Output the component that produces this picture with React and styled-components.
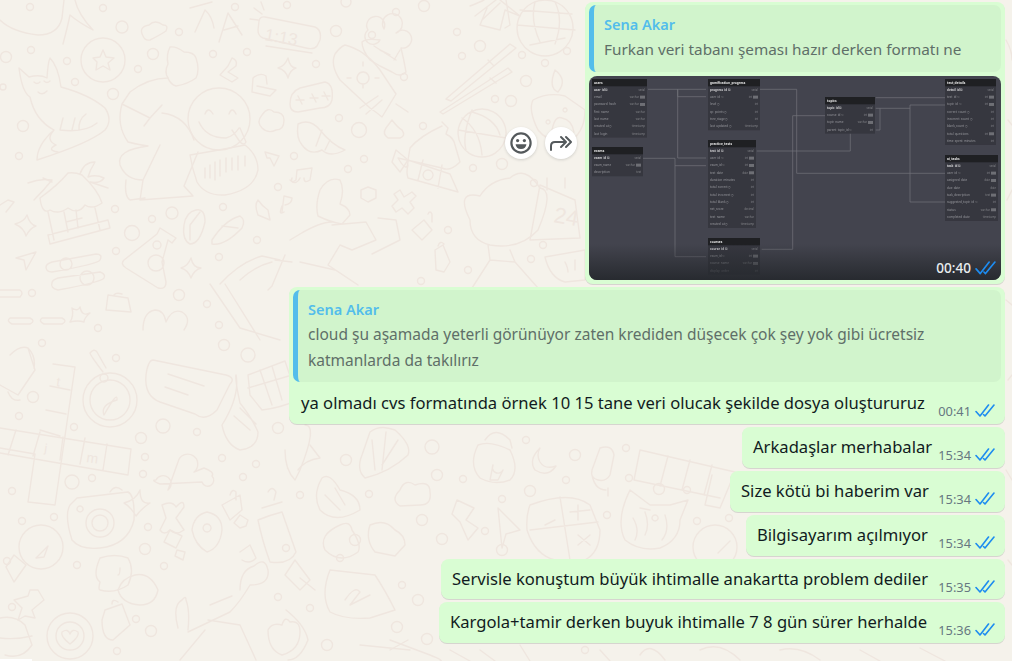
import React from 'react';
import styled, { createGlobalStyle } from 'styled-components';

const GlobalStyle = createGlobalStyle`
  html, body {
    margin: 0;
    padding: 0;
    background: #f5f2eb;
    overflow: hidden;
  }
  * { box-sizing: border-box; }
`;

// wallpaper dots, [x, y, r]
const dots = [
  [30,7,3.5],[103,8,3.5],[122,27,6],[179,32,3.5],[235,7,3.5],[287,5,3.5],[31,50,3.5],[6,57,5.5],[67,61,3.5],[153,54,5.5],[138,69,3.5],[213,54,3.5],[247,52,3.5],[75,82,3.5],[113,94,5.5],[3,87,3],[23,126,5.5],[19,156,3.5],[294,156,3.5],[278,187,3.5],[115,209,3.5],[152,219,3.5],[172,213,6],[223,207,3.5],[132,233,7.5],[116,251,3.5],[219,257,3.5],[257,240,3.5],[32,293,3.5],[179,295,5.5],[207,304,3.5],[219,325,3.5],[98,328,3.5],
  [42,343,3.5],[224,345,5.5],[248,355,7],[116,358,3.5],[33,397,5.5],[19,416,3.5],[74,427,3.5],[163,426,7],[197,432,3.5],[278,428,5.5],[141,438,5.5],[145,457,3.5],[143,474,3.5],[222,458,3.5],[256,464,3.5],[243,477,3.5],[72,482,7],[92,478,3.5],[12,491,3.5],[22,521,3.5],[54,517,3.5],[148,527,3.5],[145,549,5.5],[286,548,3.5],[7,561,3.5],[77,565,3.5],[164,566,3.5],[278,597,3.5],[12,607,3.5],[136,619,3.5],[151,631,5.5],[117,651,3.5],
  [346,2,5],[424,6,5.5],[396,12,3.5],[336,31,5.5],[372,35,3.5],[457,32,3.5],[316,64,3.5],[462,56,3.5],[480,46,5.5],[522,55,3.5],[567,51,3.5],[545,63,3.5],[404,77,3.5],[526,81,5.5],[495,99,3.5],[511,101,5.5],[339,118,3.5],[359,130,7.5],[423,126,3.5],[364,159,3.5],[348,169,3.5],[473,168,3.5],[502,164,5.5],[534,183,3.5],[448,230,3.5],[543,245,3.5],[531,259,3.5],[468,270,3.5],[421,281,3.5],
  [346,460,5.5],[432,447,7],[526,440,3.5],[575,455,5.5],[626,448,3.5],[437,475,5.5],[463,479,3.5],[566,480,3.5],[530,491,5.5],[629,478,3.5],[659,489,5.5],[687,490,3.5],[300,495,3.5],[369,494,3.5],[502,499,3.5],[607,515,3.5],[697,521,3.5],[729,518,3.5],[422,520,5.5],[485,531,3.5],[442,539,5.5],[355,540,5.5],[340,558,3.5],[502,550,5.5],[402,585,3.5],[418,600,5.5],[310,608,3.5],[397,627,5.5],[327,645,5.5],[427,639,5.5],[585,650,3.5],
];

// wallpaper line drawings
const doodles = [
  // shark, top left
  'M0 20 Q12 32 38 35 Q58 35 62 18 L64 0 M63 44 Q68 25 70 15 Q78 22 93 30 M75 0 Q78 14 93 30',
  // cloud, letters
  'M143 36 Q138 27 149 25 Q155 19 163 25 Q169 25 166 31 Q160 35 150 40 Q145 41 143 36Z',
  'M190 8 L212 2 M195 32 L205 10 Q212 16 214 28 M219 42 L228 13 L242 35 M224 30 L238 26',
  // clock
  'M265 17 L315 27 Q322 30 320 40 L317 46 Q314 50 306 48 L263 38 Q258 36 258 30 L259 21 Q260 16 265 17Z M266 46 L312 53 M254 8 L262 14 M250 19 L258 20 M261 2 L264 10',
  // star in a circle
  'M81 60 a22 22 0 1 0 44 0 a22 22 0 1 0 -44 0 M103 50 L106 57 L114 58 L108 63 L110 70 L103 66 L96 70 L97 62 L93 58 L100 57Z',
  // fox
  'M19 68 L29 77 Q40 74 47 78 Q48 62 50 58 Q58 66 61 87 Q90 95 105 108 Q113 120 105 130 Q90 143 37 160 Q37 145 54 130 Q35 120 30 97 Q22 92 19 68Z M54 130 Q45 140 56 145 Q46 150 58 152 M63 118 L60 130 M75 118 L72 130 M86 114 Q78 120 79 130 M97 123 Q85 133 60 130 M34 82 Q37 85 40 82 M44 81 Q47 84 50 81 M38 92 Q42 96 47 91',
  // man hugging the smiley
  'M170 47 Q176 46 184 52 Q194 52 196 58 Q200 70 196 78 Q188 84 176 86 Q170 84 168 78 Q164 72 168 64 Q166 55 170 47Z',
  'M168 78 Q148 78 130 92 L122 104 Q116 125 128 142 Q140 145 148 146 Q116 150 120 165 Q126 180 143 180 L140 200 L193 196 L184 186 L198 152 M122 104 L150 118 L162 105 M150 118 L144 126 M162 113 Q186 116 194 140 M143 180 L160 145 M126 180 Q124 196 130 200 L145 198',
  // smiley with tongue
  'M188 119 a31 31 0 1 0 62 0 a31 31 0 1 0 -62 0 M199 122 Q206 138 226 138 Q234 136 239 128 M205 114 Q208 106 213 114 M229 114 Q232 106 236 114 M232 130 L240 142 Q244 146 246 142 L240 128',
  'M190 155 Q220 150 245 145 Q258 155 258 170 Q254 190 225 195 Q205 196 197 182 Q192 168 190 155Z M205 168 L205 178 M210 165 L210 178 M215 162 L215 180 M220 160 L220 176 M226 158 L226 172 M232 158 L232 170 M238 156 L238 170 M245 156 L245 166',
  // padlocks, stars
  'M228 72 L238 78 L232 82 L220 75 L228 66 L232 58 Q238 60 236 66Z',
  'M257 86 L276 90 L270 96 L252 92 L253 78 Q260 72 266 76 L267 84',
  'M288 58 Q290 68 296 68 Q290 70 288 78 Q286 70 278 68 Q285 66 288 58Z',
  'M262 115 Q268 106 274 112 Q284 112 284 120 Q284 130 276 130 Q268 134 262 128 Q256 122 262 115Z',
  'M265 152 L279 156 L274 166 L270 158 L267 158Z M290 180 Q296 186 300 178',
  'M258 200 Q262 206 268 210 L270 220 L258 215Q254 205 258 200Z M282 212 L284 196 L292 198 Q292 204 285 205 M284 212 Q278 216 282 206',
  // hut
  'M40 198 Q58 185 68 173 Q75 172 82 175 Q98 190 102 203 Q92 210 85 205 Q78 215 68 208 Q58 215 50 210 Q42 215 40 198Z M48 212 L54 240 M95 208 L100 230 M48 235 L108 220 L110 228 L50 244 Z M64 212 L68 232 M76 210 L78 228 M66 222 L82 218 M28 183 Q40 178 52 180 Q44 190 34 200 M80 174 Q84 162 95 162 Q90 170 88 177 Q96 174 104 178 Q100 184 90 182 L108 188',
  'M43 178 L52 182 M0 205 L8 200 L14 202 L6 212',
  // sparkles
  'M27 215 Q30 225 36 226 Q30 228 26 236 Q24 228 15 224 Q24 222 27 215Z',
  'M191 258 Q193 268 201 268 Q194 270 191 278 Q188 270 181 268 Q188 266 191 258Z',
  'M80 307 Q82 317 90 313 Q84 318 84 322 Q78 320 70 322 Q74 316 72 308 Q78 312 80 307Z',
  // paper plane, sliders
  'M16 258 L36 252 L26 270 L24 260Z',
  'M52 262 L96 254 Q103 254 100 260 Q98 264 52 272 Q46 272 46 267 Q46 264 52 262Z M60 264 a6 6 0 1 0 12 0 a6 6 0 1 0 -12 0',
  'M58 278 L100 272 Q106 274 104 278 Q102 282 58 290 Q50 288 52 283 Q52 280 58 278Z M80 278 a7 7 0 1 0 14 0 a7 7 0 1 0 -14 0',
  'M0 290 H20 Q24 293 20 297 H0 M10 318 H30 Q36 321 30 324 H12 Q6 321 10 318Z M42 318 H62 Q68 321 62 324 H44 Q38 321 42 318Z',
  // chemistry flask
  'M160 228 L176 238 L172 243 L168 240 L162 262 L166 282 Q166 290 158 288 L126 268 Q120 264 124 260 L152 238 L157 234Z M148 263 a8 8 0 1 0 16 0 a8 8 0 1 0 -16 0 M153 245 a4 4 0 1 0 8 0 a4 4 0 1 0 -8 0',
  // flip flops
  'M196 210 Q205 208 205 222 Q200 244 190 244 Q182 240 184 225 Q186 212 196 210Z M190 225 L200 212 M190 225 L190 240',
  'M212 240 Q225 220 240 216 Q246 220 242 228 Q225 246 212 244 Z M222 226 L238 228',
  // person under umbrella bottom of the column
  'M220 284 Q240 262 262 256 L280 260 M225 284 L260 340 M240 280 Q255 266 272 262 M210 284 L240 328 L280 340 M285 255 L272 286 L268 290 M275 260 L292 262',
  // bag, heart
  'M108 295 L128 298 L131 312 L106 310Z M114 295 Q116 292 122 294',
  'M143 330 Q143 312 155 310 Q164 310 166 322 Q172 308 182 312 Q192 318 184 330',
  // teapot, coffee, crossword
  'M10 355 Q20 345 28 348 L35 370 L18 395 L0 385 M28 348 Q36 356 34 368 M8 392 Q12 402 20 400',
  'M53 364 L75 367 L55 505 L28 502 L35 454 L0 448 M0 428 L131 449 L128 475 L0 453 M50 386 L70 390 M46 410 L66 414 M40 430 L60 436 M16 430 L8 455 M40 432 L33 456 M63 437 L60 460 M85 438 L80 464 M107 444 L103 470',
  // compass
  'M83 400 a27 27 0 1 0 54 0 a27 27 0 1 0 -54 0 M90 400 a20 20 0 1 0 40 0 a20 20 0 1 0 -40 0 M117 400 Q118 390 104 415 Q100 405 117 400Z M103 372 Q90 355 90 353 Q94 348 97 352 L106 368',
  'M100 378 a4 4 0 1 0 8 0 a4 4 0 1 0 -8 0',
  // speech tag, ring hand
  'M153 360 L226 375 Q236 378 230 384 L217 410 Q205 422 195 414 L160 402 Q144 396 146 375 Q148 360 153 360Z M168 374 L204 386 M165 387 L188 395',
  'M240 403 Q235 380 236 375 Q240 396 222 425 Q226 445 240 450 Q258 448 258 432 Q252 418 240 403 M234 416 L250 430 M240 408 L256 424',
  // chocolate
  'M248 375 L285 361 L298 400 Q280 408 262 410 L250 395 Z M260 370 L272 405 M272 366 L282 400 M248 388 L292 375 M290 370 L300 365 L310 385',
  // baby with star
  'M156 480 a8 8 0 1 1 12 10 L178 462 a10 10 0 1 1 16 10 L204 468 Q215 472 212 476 a6 6 0 1 1 -10 6 L160 484 Q150 480 156 480Z',
  // bottle, padlock, plus
  'M258 520 Q270 515 282 512 L296 552 Q290 565 270 562 Q262 540 258 520Z M262 508 L282 502 M268 492 Q272 485 276 492 L274 500',
  'M222 505 L240 495 L242 510 L230 520 L222 505 M230 495 Q232 488 236 492 L236 500',
  'M162 505 Q172 500 176 507 Q184 498 184 507 L176 518 L184 530 Q176 536 170 530 Q164 536 160 530 L166 518Z',
  // camera with sparkle
  'M77 498 L128 492 Q135 495 134 520 Q128 545 100 548 Q80 550 72 540 Q64 515 70 505Z M86 523 a14 14 0 1 0 28 0 a14 14 0 1 0 -28 0 M92 523 a8 8 0 1 0 16 0 a8 8 0 1 0 -16 0 M80 506 a3 3 0 1 0 .1 0 M110 492 Q115 484 122 490 M140 490 Q140 505 150 503 Q142 508 136 516 Q130 506 124 503 Q136 500 140 490Z',
  // location pin, squares
  'M207 512 Q222 515 222 530 Q220 548 207 552 Q195 545 192 530 Q194 515 207 512Z M207 524 a4 4 0 1 0 .1 0',
  'M170 530 L182 536 L176 548 L164 542Z M177 550 L185 552 L183 560 L175 556Z',
  'M240 515 L248 520 L246 526 L240 528 L234 523Z',
  // gauge
  'M19 547 a22 22 0 1 0 44 0 a22 22 0 1 0 -44 0 M36 558 L48 546 L44 557 Z',
  // dumplings, girl
  'M100 558 Q115 553 128 558 Q135 570 128 585 Q115 594 100 590 Q98 590 100 582 Q92 576 100 558Z M120 568 Q120 575 118 575',
  'M135 575 Q150 572 158 590 Q155 605 140 605 Q122 604 118 590 Q122 578 135 575Z',
  'M178 628 Q172 605 182 600 Q186 595 186 600 Q190 610 188 630 M210 605 Q222 600 232 596 M240 590 Q240 570 254 566 Q265 556 268 570 Q270 585 250 585 Q240 602 230 612 L188 632 M208 620 L240 625 L256 660 M180 660 L205 630 M240 552 L250 545 L256 558 Q250 565 242 560',
  // apple, bottle, heart cup
  'M282 625 Q285 615 290 622 Q300 620 300 632 Q300 650 282 655 Q268 650 268 630 Q272 622 282 625Z',
  'M105 610 L122 604 L130 625 L113 640 Q102 640 102 620Z M112 604 Q112 598 118 602',
  'M47 636 a23 23 0 1 0 46 0 a23 23 0 1 0 -46 0 M56 636 a14 14 0 1 0 28 0 a14 14 0 1 0 -28 0 M70 644 Q60 636 62 632 Q68 628 70 634 Q72 628 78 632 Q80 636 70 644Z',
  'M0 618 Q15 615 25 625 L32 645 Q22 660 5 655 M0 638 Q15 640 32 636',
  // star bottom left cross
  'M30 590 H38 L44 600 L32 610 L35 618 L25 616 L18 620 L22 608 L14 600 L28 596Z',
  'M14 582 L26 565 L14 555 L6 567Z',
  // sunscreen tube
  'M345 45 Q365 50 380 70 Q390 85 396 94 L382 117 Q376 112 370 108 L340 80 Q330 65 335 54 Q340 47 345 45Z M382 100 L366 114 M378 96 L360 108 M396 104 L408 112 M363 72 a6 6 0 1 0 .1 0 M363 62 V66 M363 84 V88 M375 78 H379 M347 78 H351',
  // friends cluster
  'M380 40 a8 8 0 1 1 -12 -10 a9 9 0 1 1 16 -1 a10 10 0 1 1 12 4 a9 9 0 1 1 5 15 Q404 60 406 72 Q400 78 392 72 L380 66 L370 60 Q362 50 362 42 Q366 38 380 40Z M400 50 L394 60 M390 55 L380 50 M396 60 L374 46',
  // palm
  'M470 6 Q480 2 484 0 M496 0 L475 16 M482 20 L500 3 M487 8 L480 25 L500 30 L505 10 M505 10 L520 16 L500 0 M506 0 L510 25 L505 28',
  // disco ball
  'M545 0 a28 28 0 1 0 .1 0 M517 25 L575 30 M520 10 L572 14 M530 45 L565 38 M535 2 Q530 20 540 42 M555 2 Q564 20 555 44',
  // chopsticks
  'M510 44 L447 98 L446 99 L451 101 L516 48 Q510 44 510 44Z M508 68 L440 112 L443 114 L512 72Z M488 60 L494 66 M490 78 L496 83',
  // diya with flame
  'M555 70 Q568 80 558 92 Q548 88 555 70Z M533 100 Q548 92 565 96 L585 110 Q585 130 572 140 Q550 145 538 130 Q528 110 533 100Z M552 130 Q555 115 562 118 Q572 120 574 132 M548 120 a2 2 0 1 0 .1 0 M565 108 a2 2 0 1 0 .1 0',
  // pass bubble, shell
  'M300 88 L325 82 Q334 84 332 100 Q330 108 320 108 L298 112 Q290 112 290 104 Q290 92 300 88Z M296 100 H304 M298 96 L302 104 M310 98 H318 M312 94 L316 102 M322 96 H330 M324 92 L328 100',
  'M298 124 Q310 118 320 130 Q332 145 345 150 Q330 158 322 150 Q310 156 302 145 Q296 138 298 124Z M322 130 L316 146 M330 140 L325 150',
  // basketball
  'M482 109 a24 24 0 1 0 .1 0 M462 118 Q480 130 482 155 M458 130 L506 138 M472 112 Q495 118 500 135 M472 110 Q462 135 466 150',
  // poo, house
  'M392 120 Q398 128 402 130 Q406 136 400 138 L388 138 Q382 134 386 128 L392 120Z',
  'M442 122 L448 128 L446 134 Q454 138 455 145 L460 162 Q450 172 442 168 L398 158 Q408 175 408 160 M408 160 L450 174 L458 192 L408 178 Q406 172 408 165 M410 148 Q420 136 442 126 M410 148 L408 160 M423 160 L418 180 M442 165 L438 188 M428 170 a5 5 0 1 0 .1 0',
  'M396 150 L408 160 L400 172 L392 162Z',
  // music note
  'M297 170 L312 168 L310 180 Q304 184 304 178 M297 170 L296 180 Q290 184 292 178',
  // woman with paper, top left of second block
  'M320 190 Q328 176 340 180 Q345 190 340 204 Q350 208 350 215 L342 224 Q330 222 318 216 Q315 205 320 190Z M332 222 Q320 222 300 234 L290 240 M332 225 L366 222 L376 240 L352 250 L340 245 L328 265 L358 285 M378 218 L396 220 L400 240 L372 254 M300 262 L335 270',
  // hexagon, cross, padlock
  'M368 187 L376 190 L376 198 L368 202 L361 198 L361 190Z M400 190 L404 197 L412 192 L416 196 L410 202 L414 208 L408 214 L402 208 L396 212 L392 206 L398 200 L394 194Z',
  'M424 220 L432 230 L422 240 L412 230Z M428 214 Q430 210 432 214 L432 222',
  'M435 250 L443 245 L450 262 L444 272 L436 270Z M438 246 Q440 240 444 244',
  // tree
  'M510 178 Q525 165 540 188 Q555 190 538 230 Q520 250 490 245 Q470 240 470 220 Q455 190 480 196 Q490 180 510 178Z M488 245 L490 260 L472 288 M510 250 L515 262 L538 288 M490 260 L515 262',
  // calendar, melon
  'M540 185 L575 200 L580 238 L530 240 L540 185Z M547 178 V190 M565 178 V188',
  'M545 257 L585 250 V280 L565 282 Q550 278 545 257Z M565 262 Q568 268 568 272 M575 260 V270',
  // hands, corn
  'M305 425 Q318 425 300 470 L295 480 Q285 470 285 450 M310 445 L320 458 Q305 460 298 470',
  'M370 432 Q380 424 395 430 Q412 445 408 455 Q390 472 365 478 Q356 470 362 455 Z M372 440 L375 470 M386 432 L382 470 M398 440 L382 465',
  'M322 478 Q330 472 340 490 Q360 495 360 510 Q335 525 320 510 Q312 495 322 478Z M335 488 L345 505 M325 495 L340 510',
  'M340 525 Q350 520 352 530 Q362 545 358 552 Q340 565 325 550 Q318 535 340 525Z',
  'M370 525 Q385 518 395 530 Q405 535 405 545 L395 556 L375 552 Q365 540 370 525Z',
  // padlock, moon, mic
  'M478 445 Q490 440 510 450 Q520 470 510 480 Q495 486 480 478 Q468 465 478 445Z M485 440 Q495 425 510 440 L512 448 M493 465 a5 5 0 1 0 10 5 L498 480 L490 480Z',
  'M540 448 Q528 460 535 470 Q548 478 556 466 Q545 470 540 462 Q536 455 540 448Z',
  'M600 448 Q612 444 614 455 L610 475 Q606 482 598 480 Q590 478 592 470Z M592 475 Q595 490 606 490 M608 488 V496',
  // crossword 2
  'M640 450 L735 472 L720 508 L705 505 L712 475 M640 450 L634 480 L720 498 M668 456 L660 486 M690 460 L682 490 M712 465 L704 495',
  // clouds, bolt, arrow
  'M400 490 Q405 478 415 485 Q430 480 430 492 Q432 505 420 505 L400 506 Q390 500 400 490Z',
  'M457 500 L474 508 L466 520 L478 528 L468 540 L460 522 L452 514Z',
  'M498 508 L520 530 L506 534 L502 548 Z',
  // calculator
  'M530 505 Q570 490 590 505 L600 530 Q600 552 585 560 L555 560 Q535 555 527 530 Q526 515 530 505Z M560 497 L570 560 M530 530 L598 522 M545 525 L555 520 M578 505 L578 520 M570 512 L590 510 M578 535 L590 545 M590 535 L578 545',
  // cat
  'M630 490 L650 505 L670 505 L688 500 L680 520 Q680 540 660 548 Q640 552 625 540 Q615 520 630 490Z M633 518 Q640 530 635 540 M645 512 Q650 525 645 535 M655 515 a3 3 0 1 0 .1 0 M665 515 Q670 530 662 540 M640 508 L650 510',
  // gauge 2
  'M693 547 a22 22 0 1 0 44 0 a22 22 0 1 0 -44 0 M718 553 L730 541',
  // pin, bubble, leaves
  'M295 560 L310 580 L300 590 L285 575Z M300 578 L315 590',
  'M330 570 L375 575 Q385 590 395 610 L370 618 Q345 620 330 612 Q320 595 330 570Z M345 600 Q355 585 360 592 L350 605 L370 595',
  'M286 610 Q305 625 308 640 Q300 660 288 660',
  'M360 645 L410 650 M390 650 L408 640 M390 640 L430 655 Q445 661 440 661',
  'M450 650 L470 661 M480 650 L495 661 M520 645 L530 661 M600 650 L610 661 M640 655 Q650 640 665 660 M700 650 Q720 640 740 660 M780 650 Q800 645 820 660 M860 650 L880 661 M920 648 L945 661',
  // right margin
  'M1006 40 Q1012 50 1012 60 M1008 120 L1012 125 M1007 200 L1012 190 M1006 300 L1012 305 M1008 380 L1012 375 M1006 470 L1012 480 M1008 560 L1012 565',
];

const wallpaperTexts = [
  { x: 264, y: 40, size: 17, label: '1:13', rot: 10 },
  { x: 56, y: 386, size: 13, label: 't', rot: 8 },
  { x: 44, y: 452, size: 12, label: 'j', rot: 8 },
  { x: 86, y: 462, size: 14, label: 'm', rot: 8 },
  { x: 553, y: 222, size: 22, label: '24', rot: 10 },
];

const tables = [
  { name: 'users', x: 3, y: 3, w: 55, rows: [['user_id ⚿','serial'],['email','varchar',1],['password_hash','varchar',1],['first_name','varchar'],['last_name','varchar'],['created_at ◷','timestamp'],['last_login','timestamp']] },
  { name: 'exams', x: 3, y: 71, w: 51, rows: [['exam_id ⚿','serial'],['exam_name','varchar',1],['description','text']] },
  { name: 'gamification_progress', x: 119, y: 3, w: 52, rows: [['progress_id ⚿','serial'],['user_id ⚿','int',1],['level ◷','int'],['xp_points ◷','int'],['tree_stage ◷','int'],['last_updated ◷','timestamp']] },
  { name: 'practice_tests', x: 119, y: 64, w: 48, rows: [['test_id ⚿','serial'],['user_id ⚿','int',1],['exam_id ⚿','int',1],['test_date','date',1],['duration_minutes','int'],['total_correct ◷','int'],['total_incorrect ◷','int'],['total_blank ◷','int'],['net_score','decimal'],['test_name','varchar'],['created_at ◷','timestamp']] },
  { name: 'courses', x: 119, y: 162, w: 52, rows: [['course_id ⚿','serial'],['exam_id ⚿','int',1],['course_name','varchar',1],['display_order','int']] },
  { name: 'topics', x: 236, y: 21, w: 50, rows: [['topic_id ⚿','serial'],['course_id ⚿','int',1],['topic_name','varchar',1],['parent_topic_id ⚿','int']] },
  { name: 'test_details', x: 356, y: 3, w: 51, rows: [['detail_id ⚿','serial'],['test_id ⚿','int',1],['topic_id ⚿','int',1],['correct_count ◷','int'],['incorrect_count ◷','int'],['blank_count ◷','int'],['total_questions','int',1],['time_spent_minutes','int']] },
  { name: 'ai_tasks', x: 356, y: 79, w: 53, rows: [['task_id ⚿','serial'],['user_id ⚿','int',1],['assigned_date','date',1],['due_date','date'],['task_description','text',1],['suggested_topic_id ⚿','int'],['status','varchar',1],['completed_date','timestamp']] },
];

const links = [
  'M59 13.3 H117 M88.7 13.3 V82 H117 M88.7 13.3 V20.7 H117',
  'M54 82.3 H86 V180.7 H117 M86 89.7 H117',
  'M171 13.3 H207.7 V97.3 H356',
  'M172.7 173.3 H203.7 V39.7 H236',
  'M167.7 75 H261.3 V57.3',
  'M286.7 21.7 H356',
  'M286.7 32.3 H321 M321 29 H356 M321 29 V126 H356',
  'M286.7 54 H291 V32.3',
];

const Page = styled.div`
  position: relative;
  width: 100%;
  height: 100vh;
  overflow: hidden;
  background: #f5f2eb;
  display: flex;
  flex-direction: column;
  align-items: flex-end;
  padding: 2px 7px 0 0;
  font-family: "Noto Sans", sans-serif;
`;

const Wallpaper = styled.svg`
  position: absolute;
  left: 0;
  top: 0;
  width: 100%;
  height: 100%;
  fill: none;
  stroke: #efe6df;
  stroke-width: 1.4;
  stroke-linecap: round;
  stroke-linejoin: round;

  text {
    fill: #efe6df;
    stroke: none;
    font-family: "Liberation Sans", sans-serif;
  }
`;

const BottomNick = styled.div`
  position: absolute;
  left: 0;
  bottom: 0;
  width: 32px;
  height: 2px;
  background: #fff;
`;

const Bubble = styled.div`
  position: relative;
  width: ${(p) => p.$width}px;
  height: ${(p) => p.$height}px;
  margin-top: ${(p) => p.$gap ?? 3}px;
  flex-shrink: 0;
  background: #d9fdd3;
  border-radius: 8px;
  box-shadow: 0 1px 0.5px rgba(11, 20, 26, 0.13);
  padding: ${(p) => (p.$reply ? '3px 4px 4px' : '0')};
`;

const Quote = styled.div`
  height: ${(p) => p.$height}px;
  background: #d1f4cc;
  border-radius: 7px;
  border-left: 5px solid #53bdeb;
  padding: 8px 10px 0;
`;

const QuoteName = styled.div`
  font-size: 14.5px;
  font-weight: 600;
  line-height: 23px;
  color: #53bdeb;
`;

const QuoteText = styled.div`
  font-size: ${(p) => p.$size}px;
  line-height: 26px;
  color: #5f6f68;
  white-space: nowrap;
`;

const Row = styled.div`
  display: flex;
  align-items: flex-start;
  justify-content: space-between;
  padding: ${(p) => (p.$inReply ? '9px 6px 0 8px' : '8px 10px 0 11px')};
`;

const Body = styled.span`
  font-size: 16.6px;
  line-height: 24px;
  color: #111b21;
  white-space: nowrap;
`;

const Meta = styled.span`
  display: flex;
  align-items: center;
  gap: 4px;
  font-size: 12.8px;
  line-height: 16px;
  color: #667781;
  margin-top: 12px;
`;

const Frame = styled.div`
  position: relative;
  height: 204px;
  margin-top: 4px;
  border-radius: 8px;
  overflow: hidden;
  background: #43444e;

  &::after {
    content: '';
    position: absolute;
    left: 0;
    right: 0;
    bottom: 0;
    height: 36px;
    background: linear-gradient(to top, rgba(38, 41, 46, 0.95), rgba(38, 41, 46, 0));
  }
`;

const Diagram = styled.svg`
  display: block;
  width: 412px;
  height: 204px;
  filter: blur(0.4px);
`;

const ImageMeta = styled.div`
  position: absolute;
  z-index: 1;
  right: 5px;
  bottom: 4px;
  display: flex;
  align-items: center;
  gap: 4px;
  font-size: 13.6px;
  font-weight: 500;
  line-height: 16px;
  color: #e9edef;
`;

const ActionGroup = styled.div`
  position: absolute;
  right: 100%;
  top: 125px;
  margin-right: 8px;
  display: flex;
  gap: 8px;
`;

const ActionButton = styled.div`
  width: 32px;
  height: 32px;
  border-radius: 50%;
  background: #fff;
  display: flex;
  align-items: center;
  justify-content: center;
  box-shadow: 0 1px 3px rgba(11, 20, 26, 0.15);
`;

const Ticks = ({ size = 20 }) => (
  <svg width={size} height={size * 0.68} viewBox="0 0 20 13.6" fill="none" stroke="#1d8cf0" strokeWidth="1.6" strokeLinecap="round" strokeLinejoin="round">
    <path d="M1 7.5 L5 12 L13.5 1" />
    <path d="M8.5 10.5 L10 12 L19 1" />
  </svg>
);

const SmileIcon = () => (
  <svg width="24" height="24" viewBox="0 0 24 24">
    <circle cx="12" cy="12" r="9.6" fill="none" stroke="#54595c" strokeWidth="2.2" />
    <circle cx="8.6" cy="9.6" r="1.6" fill="#54595c" />
    <circle cx="15.4" cy="9.6" r="1.6" fill="#54595c" />
    <path d="M6.6 13.2 H17.4 Q17 18 12 18 Q7 18 6.6 13.2Z" fill="#54595c" />
  </svg>
);

const ForwardIcon = () => (
  <svg width="24" height="20" viewBox="0 0 24 20" fill="none" stroke="#54595c" strokeWidth="2" strokeLinecap="round" strokeLinejoin="round">
    <path d="M2 17 V13 Q2 9 6 9 H16" />
    <path d="M12 4 L17 9 L12 14" />
    <path d="M17 4 L22 9 L17 14" />
  </svg>
);

const ErdTable = ({ name, x, y, w, rows }) => (
  <g>
    <rect x={x} y={y} width={w} height={7.3 + rows.length * 7.33} fill="#36373f" />
    <rect x={x} y={y} width={w} height={7.3} fill="#1f2023" />
    <text x={x + 2} y={y + 5} fontSize="3.2" fontWeight="700" fill="#e5e5e5">{name}</text>
    {rows.map(([field, type, nn], i) => (
      <g key={field}>
        <text x={x + 2} y={y + 11.8 + i * 7.33} fontSize="3" fontWeight={i === 0 ? 700 : 400} fill={i === 0 ? '#d0d0d2' : '#9a9ba0'}>{field}</text>
        <text x={x + w - (nn ? 8 : 2)} y={y + 11.8 + i * 7.33} fontSize="2.6" textAnchor="end" fill="#85868b">{type}</text>
        {nn && <rect x={x + w - 7} y={y + 9.3 + i * 7.33} width="5" height="3" fill="#6e6f75" />}
      </g>
    ))}
  </g>
);

const App = () => {
  return (
    <Page>
      <GlobalStyle />
      <Wallpaper viewBox="0 0 1012 661" aria-hidden="true">
        {dots.map(([x, y, r]) => (
          <circle key={`${x}-${y}`} cx={x} cy={y} r={r} />
        ))}
        {doodles.map((d) => (
          <path key={d} d={d} />
        ))}
        {wallpaperTexts.map((t) => (
          <text key={t.label} x={t.x} y={t.y} fontSize={t.size} transform={`rotate(${t.rot} ${t.x} ${t.y})`}>
            {t.label}
          </text>
        ))}
      </Wallpaper>
      <BottomNick />

      <Bubble $width={420} $height={282} $gap={0} $reply>
        <ActionGroup>
          <ActionButton><SmileIcon /></ActionButton>
          <ActionButton><ForwardIcon /></ActionButton>
        </ActionGroup>
        <Quote $height={67}>
          <QuoteName>Sena Akar</QuoteName>
          <QuoteText $size={15.3}>Furkan veri tabanı şeması hazır derken formatı ne</QuoteText>
        </Quote>
        <Frame>
          <Diagram viewBox="0 0 412 204">
            <g fill="none" stroke="#73747b" strokeWidth="0.7">
              {links.map((d) => (
                <path key={d} d={d} />
              ))}
            </g>
            {tables.map((t) => (
              <ErdTable key={t.name} {...t} />
            ))}
          </Diagram>
          <ImageMeta>00:40 <Ticks size={21} /></ImageMeta>
        </Frame>
      </Bubble>

      <Bubble $width={716} $height={137} $reply>
        <Quote $height={92}>
          <QuoteName>Sena Akar</QuoteName>
          <QuoteText $size={15.5}>
            cloud şu aşamada yeterli görünüyor zaten krediden düşecek çok şey yok gibi ücretsiz<br />
            katmanlarda da takılırız
          </QuoteText>
        </Quote>
        <Row $inReply>
          <Body>ya olmadı cvs formatında örnek 10 15 tane veri olucak şekilde dosya oluştururuz</Body>
          <Meta>00:41 <Ticks /></Meta>
        </Row>
      </Bubble>

      <Bubble $width={263} $height={41}>
        <Row>
          <Body>Arkadaşlar merhabalar</Body>
          <Meta>15:34 <Ticks /></Meta>
        </Row>
      </Bubble>
      <Bubble $width={275} $height={40.75}>
        <Row>
          <Body>Size kötü bi haberim var</Body>
          <Meta>15:34 <Ticks /></Meta>
        </Row>
      </Bubble>
      <Bubble $width={259} $height={40.75}>
        <Row>
          <Body>Bilgisayarım açılmıyor</Body>
          <Meta>15:34 <Ticks /></Meta>
        </Row>
      </Bubble>
      <Bubble $width={564} $height={40.75}>
        <Row>
          <Body>Servisle konuştum büyük ihtimalle anakartta problem dediler</Body>
          <Meta>15:35 <Ticks /></Meta>
        </Row>
      </Bubble>
      <Bubble $width={566} $height={41}>
        <Row>
          <Body>Kargola+tamir derken buyuk ihtimalle 7 8 gün sürer herhalde</Body>
          <Meta>15:36 <Ticks /></Meta>
        </Row>
      </Bubble>
    </Page>
  );
};

export default App;
